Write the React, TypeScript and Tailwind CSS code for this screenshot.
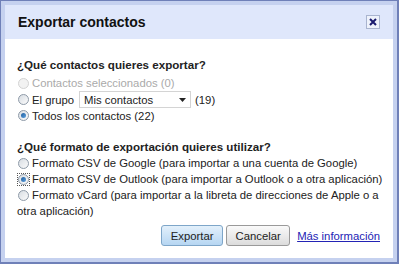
import React from 'react';

const Radio = ({ checked = false, disabled = false, focused = false }: { checked?: boolean; disabled?: boolean; focused?: boolean }) => (
  <span className={`inline-flex items-center justify-center w-[13px] h-[13px] mr-[2px] shrink-0 ${focused ? 'outline outline-1 outline-dotted outline-[#555] -outline-offset-1' : ''}`}>
    <span
      className={`flex items-center justify-center w-[11px] h-[11px] rounded-full border ${
        disabled ? 'border-[#d3d3d3] bg-[#f2f2f2]' : 'border-[#8e9aa8] bg-gradient-to-br from-[#d8dde3] to-[#fbfbfb]'
      }`}
    >
      {checked && <span className="w-[5px] h-[5px] rounded-full bg-gradient-to-br from-[#1c5b9c] to-[#5fa3e0]" />}
    </span>
  </span>
);

const App = () => {
  return (
    <div
      className="w-[399px] h-[264px] border-t border-l border-r-2 border-b-2 border-[#6f80b8] bg-[#c5d1ef] p-[4px] text-[#222]"
      style={{ fontFamily: '"Liberation Sans", Arial, sans-serif' }}
    >
      <div className="flex flex-col h-full">
        <div className="h-[34px] shrink-0 bg-[#dfe7fb] flex items-center justify-between pl-[13px] pr-[13px]">
          <h1 className="text-[14px] leading-[16px] font-bold text-[#111]">Exportar contactos</h1>
          <button className="w-[14px] h-[14px] border border-[#a9b4cf] bg-[#eef2fb] flex items-center justify-center">
            <svg width="8" height="8" viewBox="0 0 8 8">
              <path d="M1 1L7 7M7 1L1 7" stroke="#1a1a6e" strokeWidth="2" />
            </svg>
          </button>
        </div>
        <div className="flex-1 min-h-0 bg-white pl-[12px] pr-[5px] pt-[18px] text-[11.3px] leading-[16px]">
          <h2 className="h-[16px] text-[11.6px] font-bold">¿Qué contactos quieres exportar?</h2>
          <div className="flex items-center h-[16px] mt-[2px] text-[#aaa]">
            <Radio disabled />
            <span>Contactos seleccionados (0)</span>
          </div>
          <div className="flex items-center h-[17px]">
            <Radio />
            <span className="mr-[5px]">El grupo</span>
            <div className="w-[112px] h-[17px] border border-[#d4d4d4] flex items-center justify-between px-[4px]">
              <span>Mis contactos</span>
              <svg width="7" height="4" viewBox="0 0 7 4">
                <path d="M0 0H7L3.5 4Z" fill="#222" />
              </svg>
            </div>
            <span className="ml-[4px]">(19)</span>
          </div>
          <div className="flex items-center h-[15px]">
            <Radio checked />
            <span>Todos los contactos (22)</span>
          </div>

          <h2 className="h-[16px] text-[11.6px] font-bold mt-[16px]">¿Qué formato de exportación quieres utilizar?</h2>
          <div className="flex items-center h-[16px] whitespace-nowrap">
            <Radio />
            <span>Formato CSV de Google (para importar a una cuenta de Google)</span>
          </div>
          <div className="flex items-center h-[16px] whitespace-nowrap">
            <Radio checked focused />
            <span>Formato CSV de Outlook (para importar a Outlook o a otra aplicación)</span>
          </div>
          <div className="h-[32px] pr-[8px]">
            <span className="inline-flex align-[-2px]">
              <Radio />
            </span>
            Formato vCard (para importar a la libreta de direcciones de Apple o a otra aplicación)
          </div>

          <div className="flex items-center justify-end mt-[6px] pr-[8px]">
            <button className="w-[62px] h-[21px] rounded-[3px] border border-[#7ea6c9] bg-gradient-to-b from-[#e3f0fb] to-[#b6d6f2] text-[11.3px]">
              Exportar
            </button>
            <button className="ml-[3px] w-[64px] h-[21px] rounded-[3px] border border-[#9a9a9a] bg-gradient-to-b from-[#fafafa] to-[#dcdcdc] text-[11.3px]">
              Cancelar
            </button>
            <a href="#" className="ml-[7px] text-[#2323b5] underline text-[11.3px]">
              Más información
            </a>
          </div>
        </div>
      </div>
    </div>
  );
};

export default App;
